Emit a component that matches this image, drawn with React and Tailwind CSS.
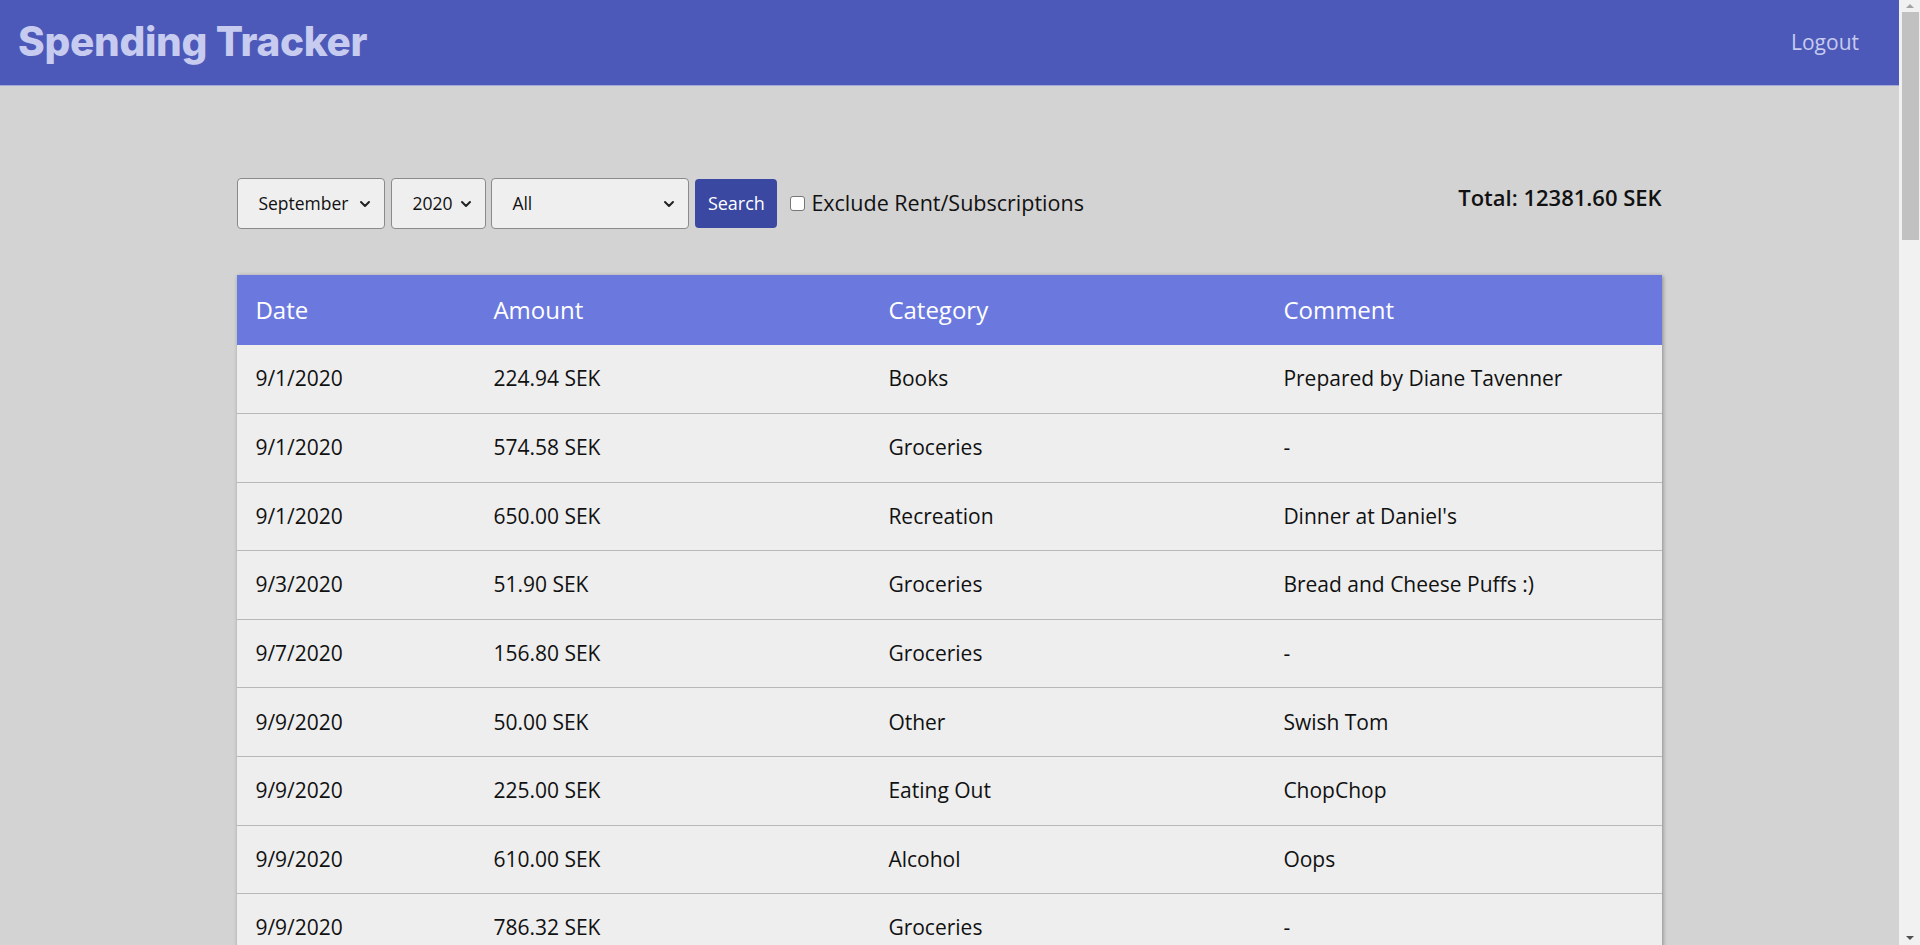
import React from 'react';
import { ChevronDown } from 'lucide-react';

const rows = [
  ['9/1/2020', '224.94 SEK', 'Books', 'Prepared by Diane Tavenner'],
  ['9/1/2020', '574.58 SEK', 'Groceries', '-'],
  ['9/1/2020', '650.00 SEK', 'Recreation', "Dinner at Daniel's"],
  ['9/3/2020', '51.90 SEK', 'Groceries', 'Bread and Cheese Puffs :)'],
  ['9/7/2020', '156.80 SEK', 'Groceries', '-'],
  ['9/9/2020', '50.00 SEK', 'Other', 'Swish Tom'],
  ['9/9/2020', '225.00 SEK', 'Eating Out', 'ChopChop'],
  ['9/9/2020', '610.00 SEK', 'Alcohol', 'Oops'],
  ['9/9/2020', '786.32 SEK', 'Groceries', '-'],
  ['9/10/2020', '89.00 SEK', 'Subscriptions', 'Spotify'],
  ['9/11/2020', '312.45 SEK', 'Groceries', '-'],
  ['9/12/2020', '180.00 SEK', 'Eating Out', 'Pizza'],
];

const Select = ({ width, value, options }) => (
  <div className={`relative ${width}`}>
    <select
      defaultValue={value}
      className="h-[51px] w-full appearance-none rounded-[4px] border border-[#8a8a8a] bg-[#efefef] pl-[20px] text-[17.5px] text-[#111] outline-none"
    >
      {options.map((o) => (
        <option key={o}>{o}</option>
      ))}
    </select>
    <ChevronDown size={16} strokeWidth={3} className="pointer-events-none absolute right-[12px] top-[18px] text-[#222]" />
  </div>
);

// fake browser scrollbar, the reference shows one
const Scrollbar = () => (
  <div className="flex h-screen w-[21px] shrink-0 flex-col items-center bg-[#f1f1f1]">
    <div className="flex h-[12px] w-full items-center justify-center">
      <span className="h-0 w-0 border-x-[4px] border-b-[4px] border-x-transparent border-b-[#a3a3a3]"></span>
    </div>
    <div className="ml-[2px] h-[228px] w-[17px] bg-[#c1c1c1]"></div>
    <div className="flex-1"></div>
    <div className="flex h-[14px] w-full items-center justify-center">
      <span className="h-0 w-0 border-x-[4px] border-t-[4px] border-x-transparent border-t-[#505050]"></span>
    </div>
  </div>
);

const App = () => {
  return (
    <div className="flex h-screen overflow-hidden bg-[#d3d3d3] font-['Open_Sans',sans-serif] text-[#111]">
      <div className="h-screen flex-1 overflow-hidden">
        <header className="flex h-[85px] items-center justify-between bg-[#4c59b8] pl-[18px] pr-[40px] shadow-[0_1px_0_#a3aad8]">
          <h1 className="font-['Inter',sans-serif] text-[40.5px] font-extrabold tracking-[-0.3px] text-[#c6cbef]">Spending Tracker</h1>
          <span className="text-[21px] text-[#c6cbef]">Logout</span>
        </header>

        <main className="mx-auto w-[75%] pb-10">
          <div className="mt-[93px] flex items-start justify-between">
            <div className="flex items-center">
              <Select width="w-[148px]" value="September" options={['January', 'February', 'March', 'April', 'May', 'June', 'July', 'August', 'September', 'October', 'November', 'December']} />
              <div className="ml-[6px]">
                <Select width="w-[95px]" value="2020" options={['2019', '2020', '2021']} />
              </div>
              <div className="ml-[5px]">
                <Select width="w-[198px]" value="All" options={['All', 'Groceries', 'Books', 'Recreation', 'Other']} />
              </div>
              <button className="ml-[6px] h-[49px] w-[82px] rounded-[4px] bg-[#3a48a1] text-[18px] text-white">Search</button>
              <label className="ml-[13px] flex items-center gap-[6px] text-[21.5px]">
                <span className="h-[15px] w-[15px] rounded-[3px] border border-[#767676] bg-white"></span>
                Exclude Rent/Subscriptions
              </label>
            </div>
            <div className="mt-[3px] text-[22px] font-semibold">Total: 12381.60 SEK</div>
          </div>

          <table className="mt-[46px] w-full table-fixed border-collapse bg-[#eeeeee] text-left text-[21px] shadow-[1px_1px_4px_rgba(0,0,0,0.35)]">
            <colgroup>
              <col className="w-[238px]" />
              <col className="w-[395px]" />
              <col className="w-[395px]" />
              <col />
            </colgroup>
            <thead>
              <tr className="h-[70px] bg-[#6b79df] text-white">
                <th className="pl-[18px] text-[24px] font-normal">Date</th>
                <th className="pl-[18px] text-[24px] font-normal">Amount</th>
                <th className="pl-[18px] text-[24px] font-normal">Category</th>
                <th className="pl-[18px] text-[24px] font-normal">Comment</th>
              </tr>
            </thead>
            <tbody>
              {rows.map((r, i) => (
                <tr key={i} className="h-[68.6px] border-b border-[#b8b8b8]">
                  {r.map((c, j) => (
                    <td key={j} className="pl-[18px]">{c}</td>
                  ))}
                </tr>
              ))}
            </tbody>
          </table>
        </main>
      </div>
      <Scrollbar />
    </div>
  );
};

export default App;
